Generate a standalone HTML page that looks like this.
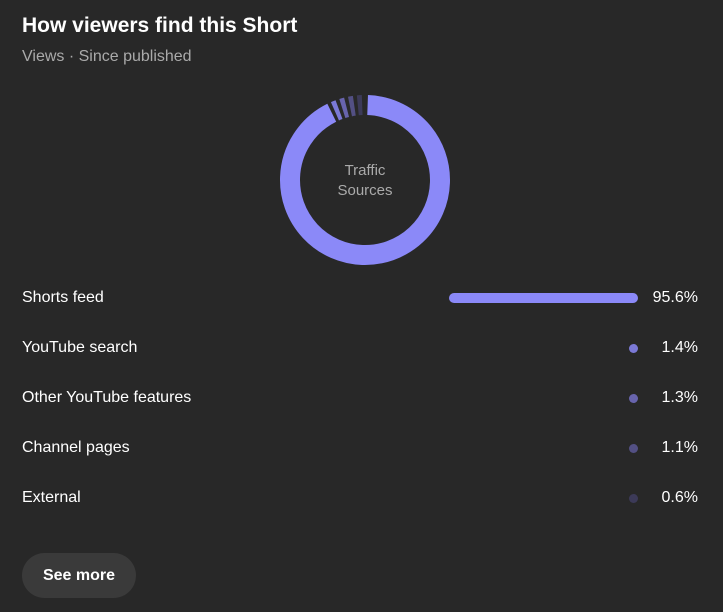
<!DOCTYPE html>
<html><head><style>
body{margin:0;width:723px;height:612px;background:#282828;font-family:"Liberation Sans",sans-serif;color:#fff;position:relative;overflow:hidden}
.t{position:absolute;left:22px;top:14px;font-size:21px;font-weight:bold}
.s{position:absolute;left:22px;top:48px;font-size:16px;color:#aaa}
.row{position:absolute;left:22px;width:676px;font-size:16px;height:20px;line-height:20px}
.row .p{position:absolute;right:0;top:0}
.dot{position:absolute;left:607px;top:6px;width:9px;height:9px;border-radius:50%}
.bar{position:absolute;left:427px;top:5px;width:189px;height:10px;border-radius:5px;background:#8b89f8}
.btn{position:absolute;left:22px;top:553px;width:114px;height:45px;border-radius:23px;background:#3a3a3a;font-size:16px;font-weight:bold;text-align:center;line-height:45px}
</style></head><body>
<div class="t">How viewers find this Short</div>
<div class="s">Views · Since published</div>
<svg style="position:absolute;left:0;top:0" width="723" height="300">
<g transform="rotate(-88 365 180)" fill="none" stroke-width="20">
<circle cx="365" cy="180" r="75" stroke="#8b89f8" stroke-dasharray="434 500" stroke-dashoffset="0"/>
<circle cx="365" cy="180" r="75" stroke="#7b79d6" stroke-dasharray="4.4 500" stroke-dashoffset="-437.5"/>
<circle cx="365" cy="180" r="75" stroke="#6864ad" stroke-dasharray="4.4 500" stroke-dashoffset="-445.4"/>
<circle cx="365" cy="180" r="75" stroke="#535084" stroke-dasharray="4.4 500" stroke-dashoffset="-453.3"/>
<circle cx="365" cy="180" r="75" stroke="#3c3a58" stroke-dasharray="4.4 500" stroke-dashoffset="-461.2"/>
</g>
<text x="365" y="175" fill="#aaa" font-size="15" text-anchor="middle" font-family="Liberation Sans">Traffic</text>
<text x="365" y="195" fill="#aaa" font-size="15" text-anchor="middle" font-family="Liberation Sans">Sources</text>
</svg>
<div class="row" style="top:288px">Shorts feed<div class="bar"></div><span class="p">95.6%</span></div>
<div class="row" style="top:338px">YouTube search<div class="dot" style="background:#7b79d6"></div><span class="p">1.4%</span></div>
<div class="row" style="top:388px">Other YouTube features<div class="dot" style="background:#6864ad"></div><span class="p">1.3%</span></div>
<div class="row" style="top:438px">Channel pages<div class="dot" style="background:#535084"></div><span class="p">1.1%</span></div>
<div class="row" style="top:488px">External<div class="dot" style="background:#3c3a58"></div><span class="p">0.6%</span></div>
<div class="btn">See more</div>
</body></html>
